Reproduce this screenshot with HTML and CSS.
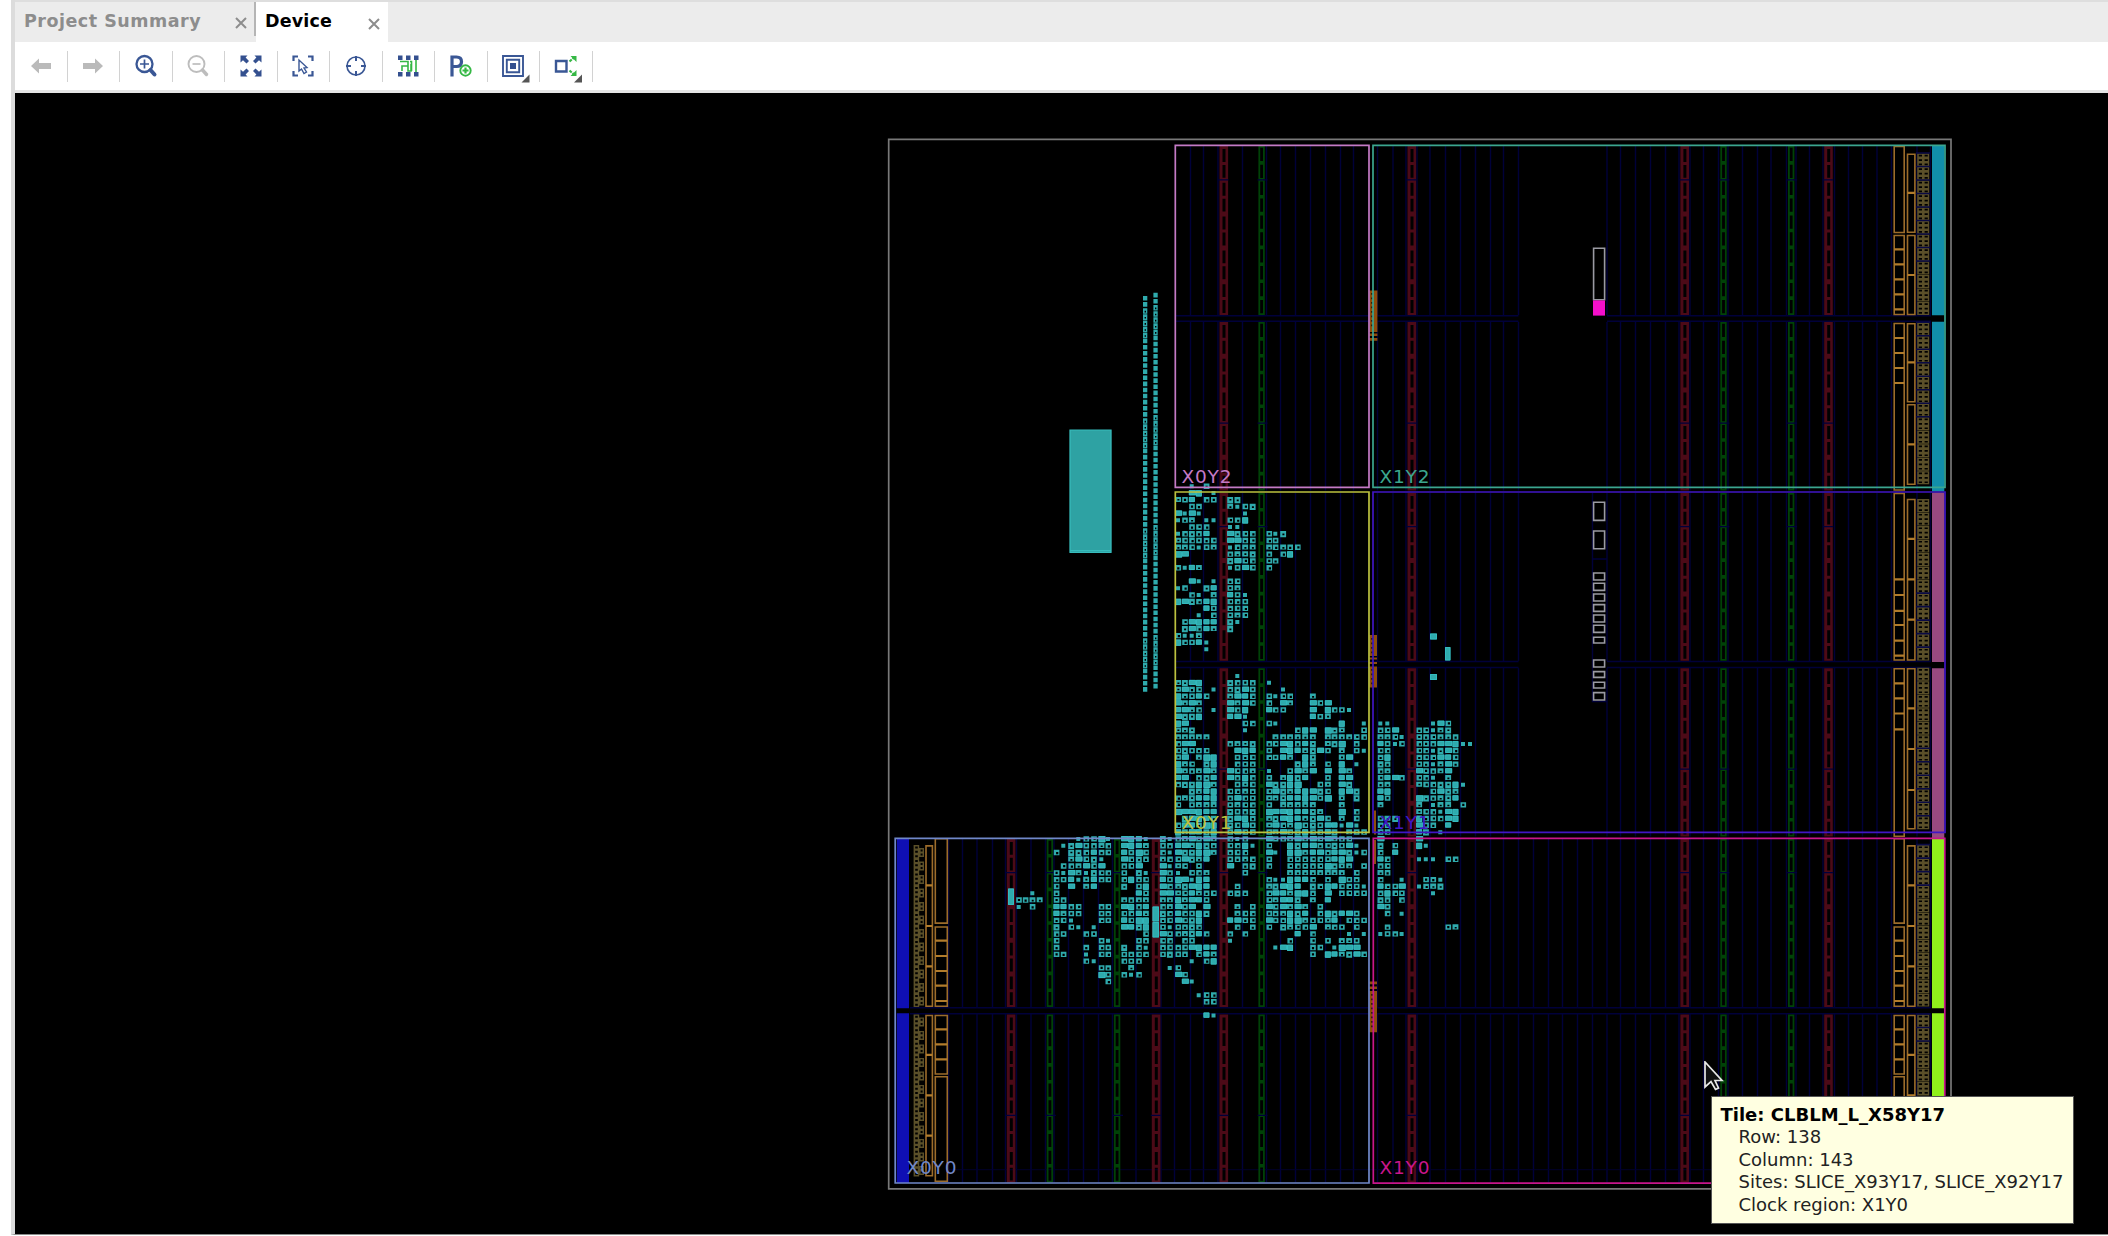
FILE: index.html
```
<!DOCTYPE html>
<html lang="en">
<head>
<meta charset="utf-8">
<title>Device</title>
<link rel="stylesheet" href="styles.css">
</head>
<body>
<div class="window">
  <nav class="tabs">
    <div class="tab tab-project"><span class="tab-name">Project Summary</span><svg class="close" viewBox="0 0 12 12"><path d="M1 1L11 11M11 1L1 11"/></svg></div>
    <div class="tab tab-active"><span class="tab-name">Device</span><svg class="close" viewBox="0 0 12 12"><path d="M1 1L11 11M11 1L1 11"/></svg></div>
  </nav>
  <div class="toolbar">
    <button class="tool"><svg viewBox="0 0 28 28"><path class="off-fill" d="M4 14L12 6.5V11H24V17H12V21.500Z"/></svg></button>
    <button class="tool"><svg viewBox="0 0 28 28"><path class="off-fill" d="M24 14L16 6.500V11H4V17H16V21.500Z"/></svg></button>
    <button class="tool"><svg viewBox="0 0 28 28"><circle class="blue" cx="12.500" cy="12" r="8" stroke-width="2.300"/><path class="blue" d="M8 12H17M12.500 7.500V16.500" stroke-width="1.700"/><path class="blue" d="M18.500 18L22.500 22.500" stroke-width="4" stroke-linecap="round"/></svg></button>
    <button class="tool"><svg viewBox="0 0 28 28"><circle class="off" cx="12.500" cy="12" r="8" stroke-width="1.900"/><path class="off" d="M8.500 12H16.500" stroke-width="1.700"/><path class="off" d="M18.500 18L22.500 22.500" stroke-width="3.400" stroke-linecap="round"/></svg></button>
    <button class="tool"><svg viewBox="0 0 28 28"><path class="blue-fill" d="M3.500 3.500H10.500L8.600 5.600L12 9L9.500 11.500L6 8.200L3.500 10.500ZM24.500 3.500H17.500L19.400 5.600L16 9L18.500 11.500L22 8.200L24.500 10.500ZM3.500 24.500H10.500L8.600 22.400L12 19L9.500 16.500L6 19.800L3.500 17.500ZM24.500 24.500H17.500L19.400 22.400L16 19L18.500 16.500L22 19.800L24.500 17.500Z"/></svg></button>
    <button class="tool"><svg viewBox="0 0 28 28"><path class="blue" stroke-width="2.200" d="M4.500 9V4.500H9M19 4.500H23.500V9M4.500 19V23.500H9M19 23.500H23.500V19"/><path class="blue" stroke-width="1.400" d="M10 8V19L12.500 17L15 21.500L17.500 20L15 16L18 15.500Z"/></svg></button>
    <button class="tool"><svg viewBox="0 0 28 28"><circle class="blue" cx="14" cy="14" r="9" stroke-width="1.600"/><path class="blue" stroke-width="2" d="M14 4V9M14 19V24M4 14H9M19 14H24"/></svg></button>
    <button class="tool"><svg viewBox="0 0 28 28"><path class="green" stroke-width="1.600" d="M6 9.500H14V14H8V19M14 14V19H17V12M16 9.500H17.500V19M22 8V20"/><path class="blue-fill" d="M4 3.500H8.500V8H4ZM12 3.500H16.500V8H12ZM20 3.500H24.500V8H20ZM4 20H8.500V24.500H4ZM12 20H16.500V24.500H12ZM20 20H24.500V24.500H20Z"/></svg></button>
    <button class="tool"><svg viewBox="0 0 28 28"><path class="blue" stroke-width="3.200" d="M5 24.500V5H9.500Q14.500 5 14.500 9.700T9.500 14.500H5"/><circle class="green" cx="18.500" cy="18.500" r="5.200" stroke-width="1.900"/><path class="green" stroke-width="2.200" d="M15.500 18.500H21.500M18.500 15.500V21.500"/></svg></button>
    <button class="tool"><svg viewBox="0 0 28 28"><path class="blue" stroke-width="1.900" d="M4 4H24V24H4ZM7.800 7.800H20.200V20.200H7.800Z"/><path class="blue-fill" d="M11 11H17V17H11Z"/><path class="corner" d="M30.500 22.500V30.500H22.500Z"/></svg></button>
    <button class="tool"><svg viewBox="0 0 28 28"><path class="blue" stroke-width="2.400" d="M4 9H14.500V19.500H4Z"/><path class="green" stroke-width="2.200" stroke-dasharray="3 1" d="M17.500 9.500L22 5.500M17.500 18.500L22 22.500"/><path class="green-fill" d="M18.500 4H24.500V10ZM18.500 24H24.500V18Z"/><path class="corner" d="M30 22.500V30.500H22Z"/></svg></button>
  </div>
  <main class="device">
    <svg class="die" id="die" viewBox="15 93 2093 1142"></svg>
    <svg class="pointer" viewBox="0 0 20 30"><path d="M1 1V26L7 20.500L11.500 28.500L14.500 27L11 19.500H18Z"/></svg>
    <div class="tooltip">
      <strong>Tile: CLBLM_L_X58Y17</strong>
      <p>Row: 138</p>
      <p>Column: 143</p>
      <p>Sites: SLICE_X93Y17, SLICE_X92Y17</p>
      <p>Clock region: X1Y0</p>
    </div>
  </main>
</div>
<script src="device.js"></script>
</body>
</html>
```
FILE: styles.css
```
* { box-sizing: border-box; }
body {
  margin: 0;
  width: 2108px;
  height: 1236px;
  overflow: hidden;
  background: #fff;
  font-family: "DejaVu Sans", sans-serif;
}
.window {
  display: flex;
  flex-direction: column;
  height: 1235px;
  margin-left: 11px;
  border-left: 4px solid #dcdcdc;
  border-bottom: 1px solid #8a8a8a;
}
.tabs {
  display: flex;
  flex: 0 0 42px;
  background: #ececec;
  border-top: 2px solid #dedede;
}
.tab {
  display: flex;
  align-items: center;
  justify-content: space-between;
  color: #8d8d8d;
  font-size: 17.5px;
  font-weight: bold;
  white-space: nowrap;
}
.tab-project {
  width: 241px;
  padding: 0 7px 0 9px;
  border-right: 2px solid #b5b5b5;
  height: 34px;
}
.tab-project .tab-name { padding-top: 4px; letter-spacing: 0.5px; }
.tab-project .close { margin-top: 8px; }
.tab-active {
  width: 132px;
  padding: 0 8px 2px 9px;
  background: #fff;
  color: #000;
}
.tab-active .tab-name { letter-spacing: 0.15px; }
.tab-active .close { margin-top: 5px; }
.close { width: 12px; height: 12px; }
.close path { stroke: #8d8d8d; stroke-width: 2; fill: none; }
.toolbar {
  display: flex;
  align-items: center;
  flex: 0 0 51px;
  background: #fff;
  border-bottom: 3px solid #e4e4e4;
}
.tool {
  display: flex;
  align-items: center;
  justify-content: center;
  width: 52.500px;
  height: 31px;
  padding: 0;
  background: none;
  border: 0;
  border-right: 1px solid #d2d2d2;
}
.tool svg { width: 28px; height: 28px; overflow: visible; }
.blue { fill: none; stroke: #3a5795; }
.blue-fill { fill: #34508f; }
.green { fill: none; stroke: #35b845; }
.green-fill { fill: #35b845; }
.off { fill: none; stroke: #bdbdbd; }
.off-fill { fill: #bababa; }
.corner { fill: #555; }
.device {
  position: relative;
  flex: 1;
  background: #000;
  overflow: hidden;
}
.die { display: block; width: 2093px; height: 1142px; }
.label { font-size: 18.5px; }
.pointer {
  position: absolute;
  left: 1689px;
  top: 968px;
  width: 20px;
  height: 30px;
}
.pointer path { fill: #111; stroke: #e8e8e8; stroke-width: 1.700; }
.tooltip {
  position: absolute;
  left: 1696px;
  top: 1003px;
  width: 363px;
  height: 128px;
  padding: 6.500px 8px 0 8.500px;
  background: #ffffe1;
  border: 1px solid #555;
  color: #222;
  font-size: 18px;
  line-height: 22.500px;
  white-space: nowrap;
}
.tooltip strong { display: block; color: #000; }
.tooltip p { margin: 0; padding-left: 18px; }
```
FILE: device.js
```
const die = document.getElementById('die');
const NS = 'http://www.w3.org/2000/svg';

function path(d, attrs) {
  const p = document.createElementNS(NS, 'path');
  p.setAttribute('d', d);
  for (const k in attrs) p.setAttribute(k, attrs[k]);
  die.appendChild(p);
}
const box = (x, y, w, h) => `M${x} ${y}h${w}v${h}h${-w}Z`;
const outline = (d, stroke, width) => path(d, { fill: 'none', stroke, 'stroke-width': width });
const solid = (d, fill) => path(d, { fill, 'fill-rule': 'evenodd' });

// Half clock-region rows, top to bottom
const halves = [[146, 315], [322, 490.5], [493, 660.7], [668.3, 836.5], [839, 1007], [1014.5, 1182.5]];

// Interconnect columns and row rails
const leftX0 = [948.5, 962.5, 977, 992.5, 1005.5, 1016.5, 1031, 1045.5, 1054, 1068.5, 1083.5, 1098.5, 1112.5, 1136, 1161, 1174.5];
const midX0 = [1190.5, 1203.5, 1218, 1242.5, 1266.5, 1280.5, 1295.5, 1310.5, 1325.5, 1340.5, 1353.5];
const nearX1 = [1377.5, 1393, 1406, 1417, 1430, 1445.5, 1460.5, 1475.5, 1490.5, 1503.5, 1518.5];
const gapX1 = [1533.5, 1548.5, 1562.5, 1577.5, 1592.5];
const farX1 = [1607, 1620.5, 1635.5, 1650.5, 1665.5, 1679, 1690, 1703.5, 1718.5, 1728, 1742.5, 1757.5, 1771, 1786.5, 1796, 1809.5, 1823, 1834.5, 1848.5, 1862.5, 1877, 1891.5, 1917, 1930.5];
let rails = '';
halves.forEach(([a, b], i) => {
  const low = i > 3;
  const xs = [...(low ? leftX0 : []), ...midX0, ...nearX1, ...(low ? gapX1 : []), ...farX1];
  xs.forEach(x => { rails += `M${x} ${a}V${b}`; });
  const y = i % 2 ? a - 0.8 : b + 0.8;
  const x0 = low ? 910 : 1176;
  rails += low ? `M${x0} ${y}H1931` : `M${x0} ${y}H1518.5M1607 ${y}H1931`;
});
rails += 'M1592.500 493V701.500H1607M1592.500 559H1607';
outline(rails, '#00003a', 1.4);
outline('M948 1169.700H1893', '#00002c', 1);

// Block RAM (red) and DSP (green) columns
const ramCols = { low: [1006.8, 1151.8], all: [1219.5, 1407.5, 1680.4, 1824.2] };
const dspCols = { low: [1046.8, 1114], all: [1258.5, 1720.4, 1788.1] };
let ram = '', dsp = '', seams = '';
halves.forEach(([a, b], i) => {
  const step = (b - a) / 10;
  const rc = i > 3 ? [...ramCols.low, ...ramCols.all] : ramCols.all;
  const dc = i > 3 ? [...dspCols.low, ...dspCols.all] : dspCols.all;
  rc.forEach(x => {
    ram += box(x, a, 8.6, b - a);
    for (let k = 0; k < 10; k++) ram += box(x + 3, a + k * step + 2 + (k % 2 ? 0 : 1), 3, step - 4);
  });
  dc.forEach(x => {
    for (let k = 0; k < 10; k++) dsp += box(x + 0.8, a + k * step + 0.9, 4.6, step - 1.8);
  });
  const sy = a + step * (i % 2 ? 6 : 2);
  rc.concat(dc).forEach(x => { seams += `M${x - 1} ${sy}h10`; });
});
solid(ram, '#4c0a17');
outline(dsp, '#004207', 1.8);
outline(seams, '#00003c', 1.2);

// I/O columns
const bankA = [
  [146, 233], [235, 249.3, 264.3, 279.3, 294.3, 309.3, 315], [323, 338, 353, 368, 383, 490.5],
  [493, 579.3, 595, 610.8, 625, 640.7, 655.7, 660.5], [668.3, 683.3, 698.3, 713.5, 729.3, 836.7],
  [838.3, 923.6], [926.5, 940.7, 956, 971, 985.7, 1001, 1006.7], [1015, 1029.3, 1044.3, 1059.3, 1074.5], [1076.3, 1181.7]
];
const bankB = [
  [153.7, 192.8, 232.7], [235, 275, 315], [323.3, 362.4, 402.3], [404.3, 444.3, 484.7],
  [499, 538.8, 579.3, 619.7, 660.5], [668.3, 708.4, 749, 790, 829.3],
  [845.4, 885.3, 926, 966.3, 1006.7], [1015, 1054.8, 1095.3, 1135.7, 1176.3]
];
let io = '', ioSplit = '';
function column(groups, x, w, from) {
  groups.forEach(g => {
    if (g[0] < from) return;
    io += box(x, g[0] + 0.5, w, g[g.length - 1] - g[0] - 1);
    g.slice(1, -1).forEach(y => { ioSplit += `M${x} ${y}h${w}`; });
  });
}
column(bankA, 1894.2, 10, 0);
column(bankB, 1907.5, 7.4, 0);
column(bankA, 935.3, 12, 838);
column(bankB, 926, 6.4, 838);
outline(io, '#9c6c2b', 1.6);
outline(ioSplit, '#b27c2c', 2.2);

// I/O logic cells
const logic = [[153.4, 0, 9], [322.7, 0, 8], [499, 7, 12], [667.7, 6, 12], [845, 0, 4], [1014.4, 0, 3]];
let cells = '', cellSeams = '';
logic.forEach(([top, s0, s1], row) => {
  for (let g = 0; g < 12; g++) {
    const y = top + g * 13.5;
    cells += box(1917.2, y, 12, 13);
    for (let k = 0; k < 3; k++) {
      cells += box(1918.8, y + 1.4 + k * 4.4, 3.2, 1.7) + box(1924.6, y + 1.4 + k * 4.4, 3.2, 1.7);
    }
    if (g >= s0 && g < s1) cellSeams += `M1916 ${y - 0.4}h14`;
    if (row > 3) {
      cells += box(913.6, y, 5.6, 13.5) + box(919.2, y + 3, 4.8, 9);
      for (let k = 0; k < 3; k++) cells += box(915.2, y + 1.4 + k * 4.4, 2.6, 2);
      cells += box(920.6, y + 4.4, 2, 2) + box(920.6, y + 8.6, 2, 2);
    }
  }
});
solid(cells, '#5b5029');
outline(cellSeams, '#0a0a45', 1.6);

// Transceiver / bank bars
const bars = [[146, 315.3], [321.7, 491.5], [492.5, 662], [668.3, 838], [838.8, 1008.3], [1013.3, 1183]];
const barFill = ['#118eaa', '#118eaa', '#984a80', '#984a80', '#90f01b', '#90f01b'];
bars.forEach(([a, b], i) => {
  solid(box(1932, a, 12.3, b - a), barFill[i]);
  if (i > 3) solid(box(896.8, a, 12.2, b - a), '#0f0fb4');
});

// Configuration column
let cfg = box(1593.6, 248.3, 11, 51.4);
[[65, 123], [151, 208], [277, 302], [308, 333], [340, 365], [372, 396], [403, 428], [434, 459], [470, 491], [538, 563], [573, 594], [605, 626], [636, 662]]
  .forEach(([a, b]) => { cfg += box(1593.6, 480.6 + a / 3, 11, (b - a) / 3 - 1.2); });
outline(cfg, '#9a9aa2', 1.6);
solid(box(1593, 300.4, 12, 15.2), '#f40fca');

// Placed cells: s = one LUT, o = partly used slice, # = full slice
const colsLeft = [1015.7, 1022.3, 1029.3, 1036.5, 1053.3, 1060.3, 1068, 1075.3, 1083, 1090.7, 1098.3, 1105, 1121, 1128, 1135.7, 1142.7, 1159.7, 1166.7];
const colsMid = [1175, 1181.7, 1188.7, 1195.7, 1203.3, 1210.5, 1227, 1234.3, 1242, 1249.5, 1266, 1272.3, 1280, 1286.9, 1294.5, 1302, 1309.7, 1317, 1324.7, 1331.3, 1338.6, 1346, 1353.4, 1360.8];
const colsRight = [1377.3, 1384.3, 1392, 1398.6, 1416, 1422.8, 1430, 1437.3, 1445, 1452.3, 1460, 1467];

const upper = [
  '..s.o.', '..##.s', '#o#.oo##', '..oo..#so#', '#s#s....s', 'so#.ssoo#', '..ooo.ss', 'so#o#.##oo' + 'os#',
  '#ooooo##oooo', '##oso#so###o#oo', '##....o###o.o#', '......##oooo', 'os##..so#oo', '', '..#s.soo', 'so..##o#',
  '..os.##os', '###o##ooo', '....#oooo', '...s.oo#o', '.o#####s', '.##o###', 'oss#', '#oo#s', '....s'
];
const lower = [
  '......|.s..', '####..|#ooo|s', '##oo.s|o##o|..s', '##o#o.|###o|osoo..#', '####..|###o|o.##..#o#', '###o.s|#o#.|#oo...#.#oos',
  '####..|##s.|......#o#', '##....|..oo|os........#..s|ss..|..s#o', '###...|..s.|....o##.###..o|oo#.|oos##',
  '#####.|....|.######.####oo|##os|ooo##o', 'o##...|o###|oo##o##.###.o.|#oso|ooo###ss', 'o#ooo.|.###|o.######o.#.os|oo..|oos##o',
  '##.###|.ooo|oo##.##...##..|o#..|ooo##o', '##o.##|.ooo|....###.o.#.s.|#o..|oos##o', '##o###|#oo#|s..o###.#.##..|o#..|#oo##.',
  '##.o##|#o#o|o.####..o.##..|o##o|oos.#.', 'o#####|.o#o|#####..o#.##..|o#..|#oo###s', '..####|oo#o|o#######o.###.|##..|..o###',
  'o#####|o#oo|#######o#.#.#.|#o..|##o###', 'o.o###|o#oo|o.#####...#...|#...|#.s##.o', '######|#oo#|########..#.o.|....|#oos##',
  '.#####|###o|########o.#.o.|o##.|#ooo##', 'o#####|#o#o|##o##o#o##s#s.|oo..|#oo.#.', '######|o#oo|o##o##oo##.#oo|oo..|##.s',
  'o##o##|oso.|#oo####o##oo..|#...|#...', '#####o|oo#s|o..####oo#o#s.|#.o.|#s..', '######|ooo.|#s.#####o###so|o.#.', 'o####.|oo#o|o..oooooo###..|#o..|sss.oo',
  '#o.o..|#.o#|o..ooooo####.o|oo..', 's.oo#.|..o.|...########.o.|#o..', '##s##.|....|oss###o.o.#oo.|o..s|.oos', '#####.|.o..|#####.#o##ooos|#oo#|so##',
  '#o##oo|o#o.|o#####o.#.oooo|o#oo|..s.', '####o.|....|o####.#.#.....|#o.o', '#o#.#.|.#.o|#o####.o......|#o..', '#oo##.|.#oo|oo####.o####o.|.o.s',
  '#o##..|##oo|#oo###oo##.ooo', 'oo#o..|.o.o|o.##oo#.#oo.o.|.o..|....o#', 'o###o.|o.o.|....#.o....s.s|soos', '.oo...|s...|...o..o.o.##o.',
  'oo####|....|.s##..oo.s###.', 'oo.o##|....|......o.#####o', '..s.o#', 'o.....', '#o....', '.#s...', '', '...soo', '....oo', '', '....#s'
];
const left = [
  '....|...soo#s|###s|#s', '....|.s##oo#o|####|oo', '....|o.##o#oo|#o#o|os', '....|..##o#s.|#o#o|#o', '....|.oo##o#.|oo#.|#s', '....|os##s#oo|o.#s|#o',
  '....|oo#s##oo|o#oo|#o', '....|o.#.##..|#.o#|#o', '..s.|o.......|..#o|##', 'oo##|oo......|#o##|##', 's.o.|##oo..oo|##o#|o#', '....|##oo..oo|oo##|#o',
  '....|oos...oo|#o##|oo', '....|#.os.s..|####|os', '....|oo..oo..|...o|#o', '....|o.....os|..oo|oo', '....|o...o.oo|#.os|oo', '....|oo..s.oo|oooo|o#',
  '....|....os..|ooo.', '....|......oo|.#..|.s', '....|......#o|oso.', '....|.......o'
];
let fills = '', edges = '';
function place(rows, cols, top) {
  rows.forEach((line, r) => {
    const y = top + r * 6.79;
    [...line.replace(/\|/g, '')].forEach((c, i) => {
      const x = cols[i];
      if (c === 's') fills += box(x + 1, y - 2, 4, 4);
      if (c === 'o') {
        const n = (r * 5 + i * 3) % 4;
        fills += box(x + 0.5, y - 2.8, 5.6, 5.4) + box(x + (n < 2 ? 2.2 : 2.8), y - (n % 2 ? 1.2 : 0.6), 2.2, 2.2);
      }
      if (c === '#') {
        const n = (r * r * 7 + i * 11 + r * i) % 10;
        const w = n < 3 ? 6.9 : 5.9;
        const h = n % 3 === 0 ? 6.2 : 5.1;
        fills += box(x + 0.2, y - 2.9, w, h);
        if (n > 5) fills += box(x + 2.4, y - 0.9 + (n % 2) * 0.6, 2, 1.6);
        else edges += box(x + 0.6, y - 2.5, w - 0.8, h - 0.8);
      }
    });
  });
}
place(upper, colsMid, 486.3);
place(lower, [...colsMid, ...colsRight], 676);
place(left, colsLeft, 839);
[[1430, 633.5, 7, 6], [1445, 647, 5.500, 13.5], [1430, 674, 7, 6], [1008, 888.5, 6, 16.5], [1152.5, 906.5, 6.5, 15], [1152.5, 922, 6.5, 15.5]]
  .forEach(([x, y, w, h]) => { fills += box(x, y, w, h); edges += box(x + 0.5, y + 0.5, w - 1, h - 1); });

// Processor pin columns
[[1143, 296], [1153.4, 292.8]].forEach(([x, top]) => {
  for (let k = 0; k < 65; k++) {
    const y = top + k * 6.11;
    const dense = k % 18 > 1 && k % 18 < 7;
    fills += box(x, y, 4.3, dense ? 5.6 : 4.6);
    if (dense) fills += box(x + 1.6, y + 2.6, 1.4, 1.6);
  }
});
solid(fills, '#2fabad');
outline(edges, '#36bfc4', 0.8);
solid(box(1069.9, 429.9, 41.3, 122.4), '#2ea2a3');
outline(box(1070, 430, 41, 122.4) + 'M1070 550.500h41', '#37bcbc', 1.2);

// Clock buffers between the region columns
let clk = box(1369.4, 290.4, 8, 41.5) + box(1369.4, 333.6, 8, 2.500) + box(1369.4, 338, 8, 2.700)
  + box(1369.4, 635, 7.6, 21) + box(1369.4, 657.500, 7.6, 2) + box(1369.4, 662, 7.6, 2) + box(1369.4, 666.500, 7.6, 21)
  + box(1369.4, 981.6, 7.6, 2.600) + box(1369.4, 986.4, 7.6, 2.600) + box(1369.4, 991, 7.6, 41.300)
  + box(1374, 810.6, 2, 24) + box(1374, 840, 2, 24);
[[293, 8], [638, 4], [669, 4], [994, 8]].forEach(([y, n]) => {
  for (let k = 0; k < n; k++) clk += box(1371.4, y + k * 4.5, 1.6, 1.8);
});
solid(clk, '#8f4d0c');

// Clock regions and die edge
outline(box(888.7, 139.4, 1062.3, 1049.4), '#787878', 1.7);
[
  ['X0Y2', 1175.3, 145.4, 1369, 487.4, '#c47ac5', 1182, 483.3],
  ['X1Y2', 1373, 145.4, 1945, 487.4, '#3ba68f', 1380, 483.3],
  ['X0Y1', 1175.3, 492, 1369, 832.4, '#bcc13e', 1182, 829.3],
  ['X1Y1', 1373, 492, 1945, 832.4, '#4016c4', 1380, 829.3],
  ['X0Y0', 895.2, 838.4, 1369, 1183, '#7088c9', 907, 1174.3],
  ['X1Y0', 1373.3, 838.4, 1944.8, 1183.2, '#c8168c', 1380, 1174.3]
].forEach(([name, x0, y0, x1, y1, color, tx, ty]) => {
  outline(box(x0, y0, x1 - x0, y1 - y0), color, 1.7);
  const t = document.createElementNS(NS, 'text');
  t.setAttribute('x', tx - 0.5);
  t.setAttribute('y', ty);
  t.setAttribute('fill', color);
  t.setAttribute('class', 'label');
  t.setAttribute('textLength', 50);
  t.textContent = name;
  die.appendChild(t);
});
```
